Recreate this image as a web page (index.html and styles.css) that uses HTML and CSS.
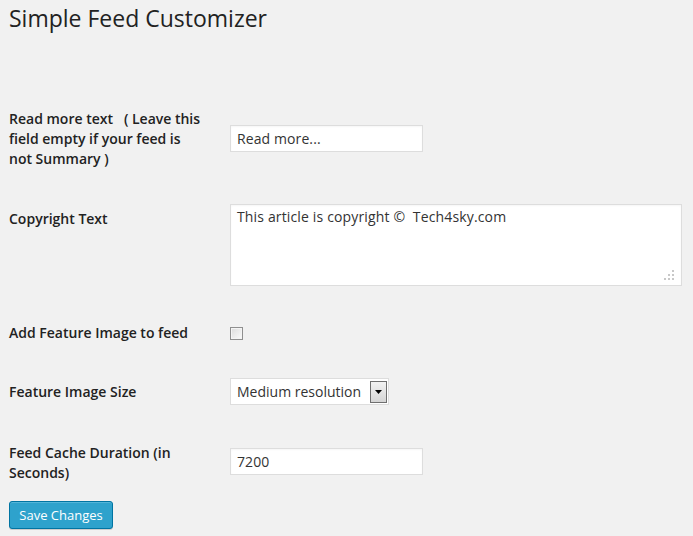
FILE: index.html
```html
<!DOCTYPE html>
<html>
<head>
<meta charset="utf-8">
<link rel="stylesheet" href="styles.css">
</head>
<body>
<div class="wrap">
  <h1 class="title">Simple Feed Customizer</h1>
  <form class="form">
    <div class="row row-1">
      <label class="label">Read more text &nbsp; ( Leave this field empty if your feed is not Summary )</label>
      <div class="field field-1"><input class="text" type="text" value="Read more..."></div>
    </div>
    <div class="row row-2">
      <label class="label label-top">Copyright Text</label>
      <div class="field">
        <div class="area">This article is copyright ©&nbsp; Tech4sky.com
          <svg class="grip" width="12" height="12" viewBox="0 0 12 12"><g fill="#c8c8c8"><rect x="10" y="0" width="2" height="2"/><rect x="6" y="4" width="2" height="2"/><rect x="10" y="4" width="2" height="2"/><rect x="2" y="8" width="2" height="2"/><rect x="6" y="8" width="2" height="2"/><rect x="10" y="8" width="2" height="2"/></g></svg>
        </div>
      </div>
    </div>
    <div class="row row-3">
      <label class="label">Add Feature Image to feed</label>
      <div class="field"><span class="check"></span></div>
    </div>
    <div class="row row-4">
      <label class="label">Feature Image Size</label>
      <div class="field">
        <div class="select"><span class="select-text">Medium resolution</span><span class="select-btn"><svg width="7" height="4" viewBox="0 0 7 4"><path d="M0 0h7L3.5 4z" fill="#000"/></svg></span></div>
      </div>
    </div>
    <div class="row row-5">
      <label class="label">Feed Cache Duration (in Seconds)</label>
      <div class="field field-5"><input class="text" type="text" value="7200"></div>
    </div>
    <div class="actions"><button class="button" type="button">Save Changes</button></div>
  </form>
</div>
</body>
</html>
```

FILE: styles.css
```css
html, body {
  margin: 0;
  padding: 0;
  background: #f1f1f1;
}
body {
  font-family: "Open Sans", "Liberation Sans", sans-serif;
  color: #222;
  width: 693px;
  height: 536px;
  overflow: hidden;
}
.wrap {
  padding: 0 0 0 9px;
}
.title {
  margin: 0;
  padding-top: 4px;
  font-size: 23px;
  font-weight: 400;
  line-height: 29px;
  color: #222;
}
.form {
  display: flex;
  flex-direction: column;
  margin-top: 76px;
}
.row {
  display: flex;
  align-items: flex-start;
}
.row-2 { margin-top: 35px; }
.row-3 { margin-top: 37px; align-items: center; }
.row-4 { margin-top: 35px; align-items: center; }
.row-5 { margin-top: 38px; }
.label {
  width: 197px;
  padding-right: 24px;
  flex: none;
  font-size: 14px;
  font-weight: 600;
  line-height: 20px;
  color: #222;
}
.label-top { padding-top: 5px; }
.field {
  display: flex;
  align-items: center;
}
.field-1 { margin-top: 16px; }
.field-5 { margin-top: 5px; }
.text {
  box-sizing: border-box;
  width: 193px;
  height: 27px;
  margin: 0;
  padding: 0 6px;
  border: 1px solid #ddd;
  background: #fff;
  font-family: "Open Sans", "Liberation Sans", sans-serif;
  font-size: 14px;
  letter-spacing: 0.1px;
  color: #333;
  box-shadow: inset 0 1px 2px rgba(0,0,0,.04);
  outline: none;
}
.area {
  position: relative;
  box-sizing: border-box;
  width: 452px;
  height: 82px;
  border: 1px solid #ddd;
  background: #fff;
  padding: 2px 6px;
  font-size: 14px;
  letter-spacing: 0.15px;
  line-height: 20px;
  color: #333;
  box-shadow: inset 0 1px 2px rgba(0,0,0,.04);
}
.grip {
  position: absolute;
  right: 7px;
  bottom: 3px;
}
.check {
  box-sizing: border-box;
  display: block;
  width: 13px;
  height: 13px;
  border: 1px solid #8f8f8f;
  background: linear-gradient(135deg, #dcdcdc, #fbfbfb);
  box-shadow: inset 0 0 0 1px #f4f4f4;
}
.select {
  box-sizing: border-box;
  display: flex;
  align-items: center;
  width: 159px;
  height: 27px;
  border: 1px solid #ddd;
  background: #fff;
  padding: 0 1px 0 6px;
}
.select-text {
  flex: 1;
  font-size: 14px;
  color: #333;
  white-space: nowrap;
}
.select-btn {
  box-sizing: border-box;
  display: flex;
  align-items: center;
  justify-content: center;
  width: 17px;
  height: 22px;
  border: 1px solid #6f6f6f;
  background: linear-gradient(#f2f2f2, #d4d4d4);
}
.actions {
  margin-top: 18px;
}
.button {
  box-sizing: border-box;
  width: 104px;
  height: 28px;
  padding: 0 0 1px;
  white-space: nowrap;
  border: 1px solid #0074a2;
  border-radius: 3px;
  background: #2ea2cc;
  color: #fff;
  font-family: "Open Sans", "Liberation Sans", sans-serif;
  font-size: 13px;
  box-shadow: inset 0 1px 0 rgba(120,200,230,.5), 0 1px 0 rgba(0,0,0,.15);
  cursor: pointer;
}
```
